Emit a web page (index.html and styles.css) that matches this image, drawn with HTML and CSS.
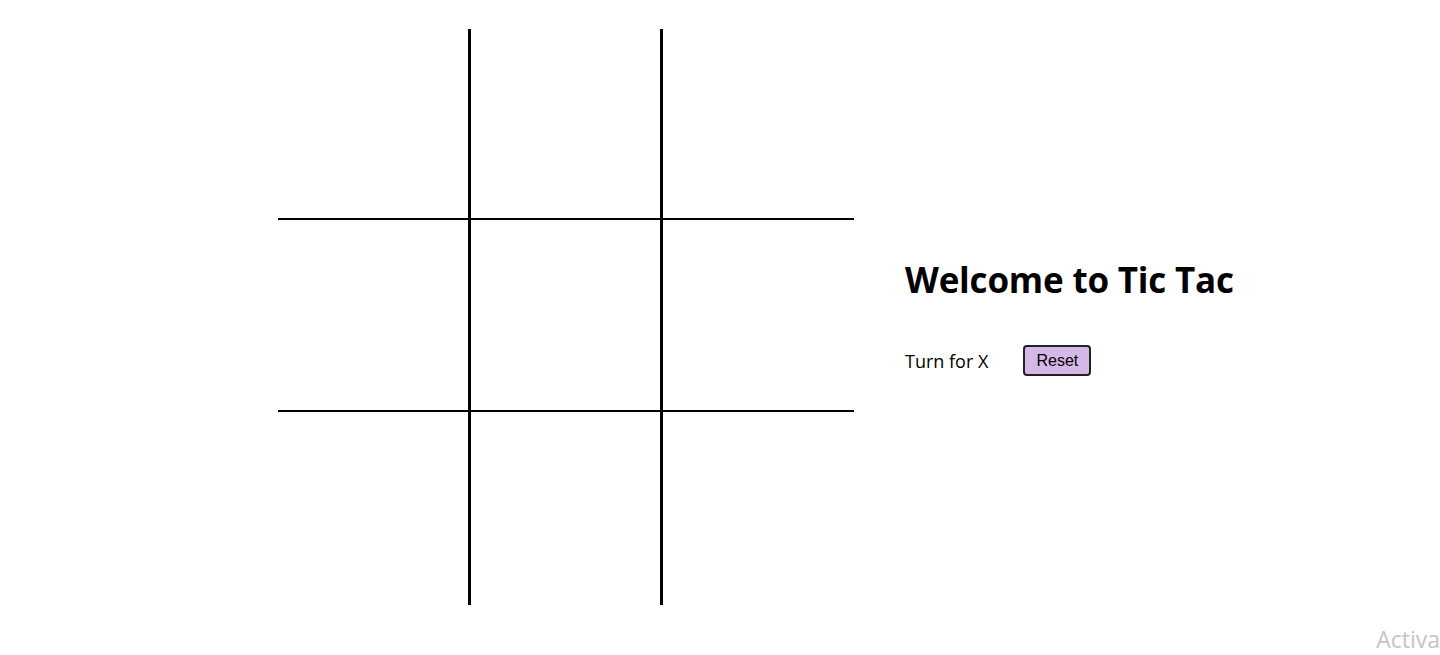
FILE: index.html
```html
<!DOCTYPE html>
<html lang="en">
<head>
<meta charset="utf-8">
<title>Tic Tac Toe</title>
<link rel="stylesheet" href="styles.css">
</head>
<body>
<main class="game">
  <div class="board">
    <div class="cell c-r c-b"></div>
    <div class="cell c-r c-b"></div>
    <div class="cell c-b"></div>
    <div class="cell c-r c-b"></div>
    <div class="cell c-r c-b"></div>
    <div class="cell c-b"></div>
    <div class="cell c-r"></div>
    <div class="cell c-r"></div>
    <div class="cell"></div>
  </div>
  <section class="info">
    <h1 class="title">Welcome to Tic Tac</h1>
    <div class="status">
      <span class="turn">Turn for X</span>
      <button class="reset">Reset</button>
    </div>
  </section>
</main>
<div class="watermark">Activa</div>
</body>
</html>
```

FILE: styles.css
```css
html, body {
  margin: 0;
  padding: 0;
  background: #ffffff;
  overflow: hidden;
}

body {
  width: 1440px;
  height: 655px;
  position: relative;
  font-family: "Open Sans", "Noto Sans", sans-serif;
  color: #000;
}

.game {
  display: flex;
  align-items: flex-start;
  padding-top: 29px;
  padding-left: 278px;
  gap: 51px;
}

.board {
  display: grid;
  grid-template-columns: 193px 192px 191px;
  grid-template-rows: 191px 192px 193px;
  width: 576px;
  height: 576px;
}

.cell {
  box-sizing: border-box;
}

.c-r {
  border-right: 3px solid #000;
}

.c-b {
  border-bottom: 2px solid #000;
}

.info {
  display: flex;
  flex-direction: column;
  padding-top: 227px;
}

.title {
  margin: 0;
  font-size: 35px;
  font-weight: 700;
  line-height: 48px;
  letter-spacing: -0.2px;
}

.status {
  display: flex;
  align-items: center;
  gap: 35px;
  margin-top: 41px;
}

.turn {
  font-size: 18px;
  line-height: 24px;
}

.reset {
  width: 68px;
  height: 31px;
  background: #d4b8e8;
  border: 2px solid #222;
  border-radius: 4px;
  font-family: "Liberation Sans", Arial, sans-serif;
  font-size: 16px;
  color: #000;
  padding: 0;
}

.watermark {
  position: absolute;
  right: 0;
  top: 624px;
  font-family: "Open Sans", "Noto Sans", sans-serif;
  font-size: 23px;
  line-height: 30px;
  color: #c4c4c4;
  white-space: nowrap;
}
```
